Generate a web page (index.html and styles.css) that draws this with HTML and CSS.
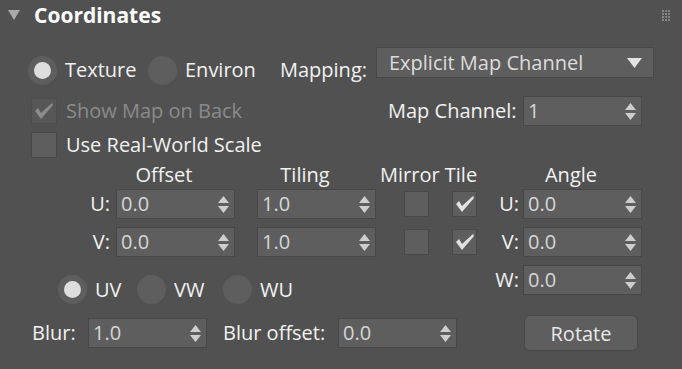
FILE: index.html
```html
<!DOCTYPE html>
<html lang="en">
  <head>
    <meta charset="UTF-8" />
    <title>Coordinates</title>
    <link rel="stylesheet" href="styles.css">
  </head>
  <body>
    <div class="rollout">
      <div class="rollout-head">
        <svg class="caret" width="12" height="10" viewBox="0 0 12 10"><polygon points="0,0 12,0 6,10" fill="#a9a9a9"/></svg>
        <span class="rollout-title">Coordinates</span>
        <svg class="grip" width="8" height="11" viewBox="0 0 8 11">
          <g fill="#858585">
            <rect x="0" y="0" width="2" height="2"/><rect x="3" y="0" width="2" height="2"/><rect x="6" y="0" width="2" height="2"/>
            <rect x="0" y="3" width="2" height="2"/><rect x="3" y="3" width="2" height="2"/><rect x="6" y="3" width="2" height="2"/>
            <rect x="0" y="6" width="2" height="2"/><rect x="3" y="6" width="2" height="2"/><rect x="6" y="6" width="2" height="2"/>
            <rect x="0" y="9" width="2" height="2"/><rect x="3" y="9" width="2" height="2"/><rect x="6" y="9" width="2" height="2"/>
          </g>
        </svg>
      </div>

      <div class="rollout-body">
        <div class="row row-mapping">
          <label class="radio w-texture"><span class="dot on"></span>Texture</label>
          <label class="radio w-environ"><span class="dot"></span>Environ</label>
          <span class="lbl w-mapping">Mapping:</span>
          <div class="dropdown">
            <span>Explicit Map Channel</span>
            <svg width="15" height="10" viewBox="0 0 15 10"><polygon points="0,0 15,0 7.5,10" fill="#e4e4e4"/></svg>
          </div>
        </div>

        <div class="row row-channel">
          <label class="check disabled w-showmap">
            <span class="box"><svg width="20" height="18" viewBox="0 0 20 18"><polygon points="1,9 4,6 7,11 18,1 19,3 7,17" fill="#8c8c8c"/></svg></span>
            Show Map on Back
          </label>
          <span class="lbl w-channel">Map Channel:</span>
          <div class="spinner">
            <span class="val">1</span>
            <svg class="arrows" width="11" height="17" viewBox="0 0 11 17"><polygon points="0,7 5.5,0 11,7" /><polygon points="0,10 11,10 5.5,17" /></svg>
          </div>
        </div>

        <div class="row row-scale">
          <label class="check"><span class="box"></span>Use Real-World Scale</label>
        </div>

        <div class="coords">
          <div class="coords-left">
            <div class="heads">
              <span class="head-cell first">Offset</span>
              <span class="head-cell second">Tiling</span>
              <span class="head-mt">Mirror Tile</span>
            </div>

            <div class="uv-row">
              <span class="axis">U:</span>
              <div class="spinner"><span class="val">0.0</span><svg class="arrows" width="11" height="17" viewBox="0 0 11 17"><polygon points="0,7 5.5,0 11,7" /><polygon points="0,10 11,10 5.5,17" /></svg></div>
              <div class="spinner"><span class="val">1.0</span><svg class="arrows" width="11" height="17" viewBox="0 0 11 17"><polygon points="0,7 5.5,0 11,7" /><polygon points="0,10 11,10 5.5,17" /></svg></div>
              <span class="box mirror"></span>
              <span class="box tile"><svg width="20" height="18" viewBox="0 0 20 18"><polygon points="1,9 4,6 7,11 18,1 19,3 7,17" fill="#e2e2e2"/></svg></span>
            </div>

            <div class="uv-row">
              <span class="axis">V:</span>
              <div class="spinner"><span class="val">0.0</span><svg class="arrows" width="11" height="17" viewBox="0 0 11 17"><polygon points="0,7 5.5,0 11,7" /><polygon points="0,10 11,10 5.5,17" /></svg></div>
              <div class="spinner"><span class="val">1.0</span><svg class="arrows" width="11" height="17" viewBox="0 0 11 17"><polygon points="0,7 5.5,0 11,7" /><polygon points="0,10 11,10 5.5,17" /></svg></div>
              <span class="box mirror"></span>
              <span class="box tile"><svg width="20" height="18" viewBox="0 0 20 18"><polygon points="1,9 4,6 7,11 18,1 19,3 7,17" fill="#e2e2e2"/></svg></span>
            </div>

            <div class="axis-radios">
              <label class="radio w-uv"><span class="dot on"></span>UV</label>
              <label class="radio w-vw"><span class="dot"></span>VW</label>
              <label class="radio"><span class="dot"></span>WU</label>
            </div>

            <div class="blur-row">
              <span class="lbl w-blur">Blur:</span>
              <div class="spinner"><span class="val">1.0</span><svg class="arrows" width="11" height="17" viewBox="0 0 11 17"><polygon points="0,7 5.5,0 11,7" /><polygon points="0,10 11,10 5.5,17" /></svg></div>
              <span class="lbl w-bluroff">Blur offset:</span>
              <div class="spinner"><span class="val">0.0</span><svg class="arrows" width="11" height="17" viewBox="0 0 11 17"><polygon points="0,7 5.5,0 11,7" /><polygon points="0,10 11,10 5.5,17" /></svg></div>
            </div>
          </div>

          <div class="coords-right">
            <div class="heads">
              <span class="head-cell angle">Angle</span>
            </div>
            <div class="uv-row">
              <span class="axis short">U:</span>
              <div class="spinner"><span class="val">0.0</span><svg class="arrows" width="11" height="17" viewBox="0 0 11 17"><polygon points="0,7 5.5,0 11,7" /><polygon points="0,10 11,10 5.5,17" /></svg></div>
            </div>
            <div class="uv-row">
              <span class="axis short">V:</span>
              <div class="spinner"><span class="val">0.0</span><svg class="arrows" width="11" height="17" viewBox="0 0 11 17"><polygon points="0,7 5.5,0 11,7" /><polygon points="0,10 11,10 5.5,17" /></svg></div>
            </div>
            <div class="uv-row">
              <span class="axis short">W:</span>
              <div class="spinner"><span class="val">0.0</span><svg class="arrows" width="11" height="17" viewBox="0 0 11 17"><polygon points="0,7 5.5,0 11,7" /><polygon points="0,10 11,10 5.5,17" /></svg></div>
            </div>
            <button class="rotate">Rotate</button>
          </div>
        </div>
      </div>
    </div>
  </body>
</html>
```

FILE: styles.css
```css
body {
  margin: 0;
  padding: 0;
  background: #515151;
  color: #f2f2f2;
  font-family: "Open Sans", "Liberation Sans", sans-serif;
  font-size: 20px;
  line-height: 26px;
  width: 682px;
  height: 369px;
  overflow: hidden;
}
.rollout-head {
  height: 30px;
  display: flex;
  align-items: center;
  padding: 0 12px 0 8px;
}
.caret {
  margin-right: 14px;
}
.rollout-title {
  font-weight: bold;
  font-size: 21px;
  color: #fff;
}
.grip {
  margin-left: auto;
}
.rollout-body {
  padding-left: 28px;
}
.row {
  display: flex;
  align-items: center;
}
.row-mapping {
  margin-top: 17px;
}
.row-channel {
  margin-top: 3px;
  height: 30px;
}
.row-scale {
  margin-top: 6px;
  height: 26px;
}
.lbl {
  white-space: nowrap;
}

/* radio buttons */
.radio {
  display: flex;
  align-items: center;
  white-space: nowrap;
}
.dot {
  width: 29px;
  height: 29px;
  border-radius: 50%;
  background: #5e5e5e;
  margin-right: 8px;
  display: flex;
  align-items: center;
  justify-content: center;
  flex: none;
}
.dot.on::after {
  content: "";
  width: 17px;
  height: 17px;
  border-radius: 50%;
  background: #dedede;
}
.w-texture { width: 120px; }
.w-environ { width: 132px; }
.w-mapping { width: 96px; }

.dropdown {
  width: 278px;
  height: 31px;
  box-sizing: border-box;
  background: #5e5e5e;
  border: 1px solid #484848;
  display: flex;
  align-items: center;
  justify-content: space-between;
  padding: 0 11px 0 12px;
  color: #dcdcdc;
  margin-bottom: 15px;
}

/* checkboxes */
.check {
  display: flex;
  align-items: center;
  white-space: nowrap;
  margin-left: 3px;
}
.box {
  width: 26px;
  height: 26px;
  box-sizing: border-box;
  background: #5e5e5e;
  border: 1px solid #494949;
  display: flex;
  align-items: center;
  justify-content: center;
  flex: none;
}
.check .box {
  margin-right: 9px;
}
.check.disabled {
  color: #8b8b8b;
}
.check.disabled .box {
  background: #575757;
  border-color: #4c4c4c;
}
.w-showmap { width: 357px; }
.w-channel { width: 135px; }

/* spinners */
.spinner {
  width: 119px;
  height: 30px;
  box-sizing: border-box;
  background: #5e5e5e;
  border: 1px solid #474747;
  display: flex;
  align-items: center;
  padding: 0 5px 0 4px;
  color: #d6d6d6;
  flex: none;
}
.arrows {
  margin-left: auto;
  fill: #cecece;
}

/* offset / tiling / angle block */
.coords {
  display: flex;
  margin-top: 5px;
}
.coords-left {
  width: 452px;
}
.heads {
  height: 24px;
  display: flex;
  align-items: center;
  white-space: nowrap;
}
.head-cell {
  width: 96px;
  text-align: center;
}
.head-cell.first { margin-left: 88px; }
.head-cell.second { margin-left: 45px; }
.head-mt { margin-left: 27px; }
.head-cell.angle { margin-left: 43px; }

.uv-row {
  display: flex;
  align-items: center;
  height: 30px;
  margin-top: 2px;
}
.uv-row + .uv-row {
  margin-top: 8px;
}
.axis {
  width: 82px;
  margin-right: 6px;
  text-align: right;
}
.axis.short {
  width: 39px;
  margin-right: 4px;
}
.uv-row .spinner + .spinner {
  margin-left: 22px;
}
.box.mirror {
  width: 25px;
  margin-left: 28px;
}
.box.tile {
  width: 25px;
  margin-left: 23px;
}

.axis-radios {
  display: flex;
  margin-top: 18px;
  padding-left: 30px;
}
.w-uv { width: 79px; }
.w-vw { width: 86px; }

.blur-row {
  display: flex;
  align-items: center;
  margin-top: 14px;
  height: 30px;
}
.w-blur {
  width: 56px;
  padding-left: 4px;
}
.w-bluroff {
  width: 115px;
  margin-left: 16px;
}

.rotate {
  display: block;
  margin: 20px 0 0 44px;
  width: 114px;
  height: 36px;
  background: #5e5e5e;
  border: 1px solid #494949;
  border-radius: 6px;
  color: #e8e8e8;
  font-family: inherit;
  font-size: 20px;
  padding: 0;
}
```
